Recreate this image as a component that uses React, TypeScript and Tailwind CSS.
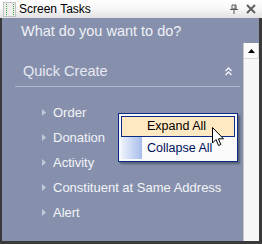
import React from "react";

const items = ["Order", "Donation", "Activity", "Constituent at Same Address", "Alert"];

function Arrow() {
  return (
    <svg width="4" height="7" viewBox="0 0 4 7" className="shrink-0">
      <path d="M0 0 L4 3.5 L0 7 Z" fill="#c3c8d8" />
    </svg>
  );
}

export default function App() {
  return (
    <div
      className="relative w-[262px] h-[244px] flex flex-col bg-[#8690ad] overflow-hidden"
      style={{ fontFamily: '"Liberation Sans", Arial, sans-serif' }}
    >
      {/* Title bar */}
      <div className="h-[18px] shrink-0 flex items-center bg-gradient-to-b from-white via-[#f6f6f6] to-[#e2e2e2]">
        <svg width="13" height="15" viewBox="0 0 13 15" className="ml-[3px]">
          <rect x="0.5" y="0.5" width="12" height="14" fill="#eeeeee" stroke="#c4c4c4" />
          <line x1="3.5" y1="2" x2="3.5" y2="14" stroke="#2fa33a" strokeDasharray="1 1" />
          <line x1="10.5" y1="2" x2="10.5" y2="14" stroke="#2fa33a" strokeDasharray="1 1" />
        </svg>
        <span className="ml-[3px] text-[12px] leading-[14px] text-black">Screen Tasks</span>
        <div className="flex-1" />
        <svg width="10" height="10" viewBox="0 0 10 10" className="mr-[7px]">
          <path d="M3 1 H7 V5 H3 Z" fill="none" stroke="#5a5a5a" />
          <path d="M6 1.5 V5" stroke="#5a5a5a" />
          <path d="M1 5.5 H9" stroke="#5a5a5a" />
          <path d="M5 5.5 V10" stroke="#5a5a5a" />
        </svg>
        <svg width="10" height="10" viewBox="0 0 10 10" className="mr-[6px]">
          <path d="M1 1 L9 9 M9 1 L1 9" stroke="#5e5e5e" strokeWidth="2" />
        </svg>
      </div>

      {/* Body */}
      <div className="flex-1 flex flex-col border-l-2 border-r-[3px] border-b-[3px] border-[#3a3a3a] min-h-0">
        <div className="h-[25px] shrink-0 pl-[19px] pt-[5px] text-[14.5px] leading-[17px] text-[#eef0f6]">
          What do you want to do?
        </div>
        <div className="flex-1 flex min-h-0">
          <div className="flex-1 flex flex-col">
            <div className="mt-[19px] ml-[13px] mr-[3px] h-[25px] flex items-start border-b border-[#b0b7cc] pl-[8px] pr-[8px]">
              <span className="text-[14.5px] leading-[18px] text-[#e6e9f1]">Quick Create</span>
              <div className="flex-1" />
              <svg width="7" height="9" viewBox="0 0 7 9" className="mt-[5px]">
                <path d="M0.5 4 L3.5 1 L6.5 4 M0.5 8 L3.5 5 L6.5 8" fill="none" stroke="#f2f4f8" strokeWidth="1.4" />
              </svg>
            </div>
            <div className="pt-[13px] flex flex-col">
              {items.map((it) => (
                <div key={it} className="h-[25px] flex items-center pl-[40px] gap-[7px]">
                  <Arrow />
                  <span className="text-[13px] leading-[15px] text-[#f2f4f8] whitespace-nowrap">{it}</span>
                </div>
              ))}
            </div>
          </div>
          {/* Scrollbar */}
          <div className="w-[16px] shrink-0 flex flex-col bg-[#f7f7f7] border-l border-[#c9c9c9]">
            <div className="h-[16px] flex items-center justify-center bg-[#fbfbfb] border-b border-r border-[#d8d8d8]">
              <svg width="7" height="4" viewBox="0 0 7 4">
                <path d="M0 4 L3.5 0 L7 4 Z" fill="#000" />
              </svg>
            </div>
          </div>
        </div>
      </div>

      {/* Context menu */}
      <div
        className="absolute left-[118px] top-[113px] w-[120px] h-[49px] bg-[#fafafa] border border-[#0b2a86] p-[2px] flex flex-col shadow-[2px_2px_2px_rgba(0,0,0,0.35)]"
        style={{ fontFamily: '"Liberation Sans", Tahoma, sans-serif' }}
      >
        <div className="h-[21px] flex items-center bg-[#ffe9c2] border border-[#0b2a86]">
          <span className="pl-[25px] text-[12.5px] text-black">Expand All</span>
        </div>
        <div className="h-[22px] flex items-center">
          <div className="w-[21px] h-full bg-gradient-to-r from-[#eef2fb] to-[#a7bdea]" />
          <span className="pl-[5px] text-[12.5px] text-[#00105a]">Collapse All</span>
        </div>
      </div>

      {/* Cursor */}
      <svg width="13" height="20" viewBox="0 0 13 20" className="absolute left-[212px] top-[127px]">
        <path d="M0.5 0.5 L0.5 16 L4 12.5 L6.5 18.5 L8.8 17.5 L6.4 11.8 L11.5 11.8 Z" fill="#fff" stroke="#000" strokeWidth="1" strokeLinejoin="miter" />
      </svg>
    </div>
  );
}
